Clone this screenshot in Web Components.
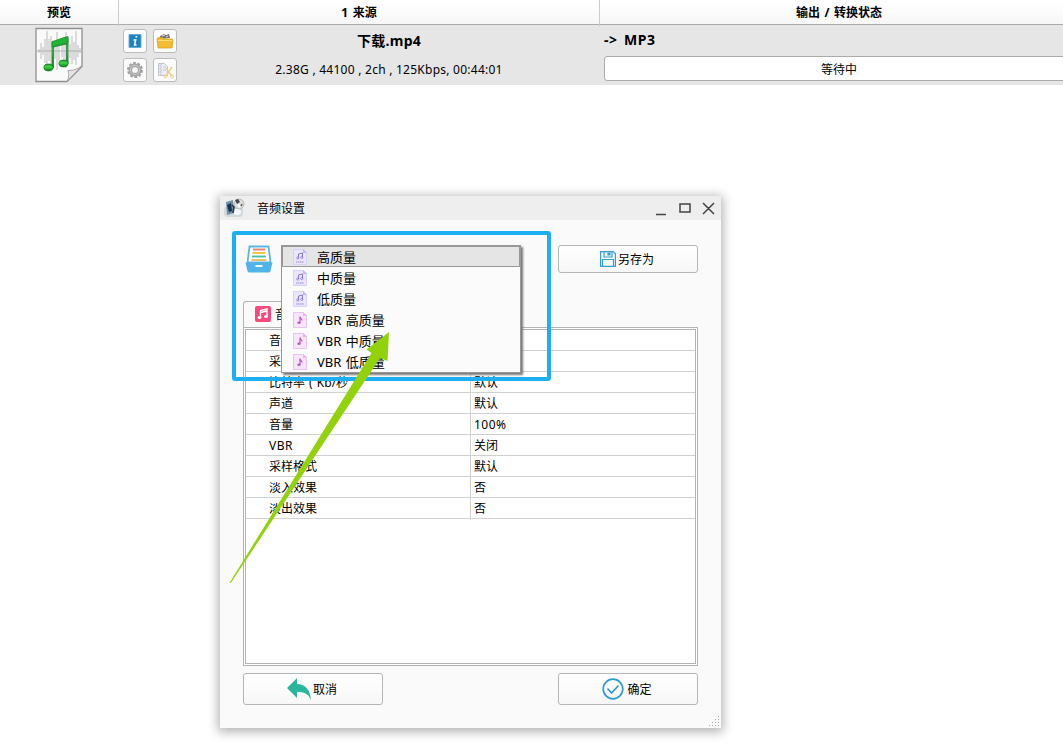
<!DOCTYPE html>
<html lang="zh-CN">
<head>
<meta charset="utf-8">
<title>音频设置</title>
<style>
html, body {
    margin: 0;
    height: 100%;
    overflow: hidden;
    background: #fff;
}
body {
    font-family: "Noto Sans", "Noto Sans CJK SC", sans-serif;
    font-size: 12px;
    line-height: 16px;
    color: #000;
}
</style>
</head>
<body>
<file-table>
    <media-row slot="rows"></media-row>
</file-table>
<settings-dialog heading="音频设置"></settings-dialog>
<callout-marks></callout-marks>

<script>
const icons = {
  preview: `<svg width="48" height="56" viewBox="0 0 48 56"><defs><linearGradient id="g" x2="0" y2="1"><stop stop-color="#159a2c"/><stop offset=".4" stop-color="#43d546"/><stop offset="1" stop-color="#0b7c13"/></linearGradient></defs>
    <path d="M1 1.500h46v38L32 54.500H1z" fill="#fafafa" stroke="#909090" stroke-width="1.300"/>
    <path d="M4 22v4M6 16v16M8 20v8M10 12v24M12 4v38M14 12v22M16 9v32M18 15v18M20 18v14M22 5v38M24 14v20M27 18v12M29 14v20M31 5v36M33 12v24M35 17v14M37 9v28M39 15v18M41 4v34M43 18v12M45 21v5" stroke="#c6c6c6" stroke-width="1.200"/>
    <path d="M2 24h44" stroke="#b0b0b0"/>
    <path d="M32 54.500c2-4 2-7 1-11 5 0 9-1 14-5z" fill="#e4e4e4" stroke="#999" stroke-width=".8"/>
    <path d="M17 15c5-1 10-4 16-5v27h-1.500V17L18.500 20v21H17z" fill="url(#g)" stroke="#0a6b16" stroke-width=".6"/>
    <path d="M17 14.500c5-1 10-4 16-5v6.500c-6 1-11 3-16 4z" fill="#22b336" stroke="#0f8724" stroke-width=".6"/>
    <ellipse cx="13.500" cy="40.500" rx="4.600" ry="3.400" fill="url(#g)" stroke="#087414" stroke-width=".7"/><ellipse cx="28.500" cy="36.500" rx="4.600" ry="3.400" fill="url(#g)" stroke="#087414" stroke-width=".7"/></svg>`,
  info: `<svg width="16" height="16" viewBox="0 0 16 16"><path d="M2 1.500h12v13H2z" fill="#1c82bd" stroke="#62aed8"/><path d="M8.500 3.700h1.800M6.500 7h2.200l-1.200 5h2" fill="none" stroke="#fff" stroke-width="1.500"/></svg>`,
  folder: `<svg width="18" height="18" viewBox="0 0 18 18"><path d="M4 7V4l4-2 2 1 3-1 1 4z" fill="#777"/><path d="M6 4l3-1M10 5l2-1" stroke="#ddd"/><path d="M1 7l1-1.500h4l2 1.500h8l1 1-1 8H2z" fill="#f2bd35" stroke="#d79b15" stroke-width=".7"/><path d="M2 8.500h14" stroke="#ffe17b"/></svg>`,
  gear: `<svg width="18" height="18" viewBox="0 0 18 18"><circle cx="9" cy="9" r="7" fill="none" stroke="#a2a2a2" stroke-width="2" stroke-dasharray="2.8 1.6"/><circle cx="9" cy="9" r="4.700" fill="none" stroke="#a5a5a5" stroke-width="3.700"/><circle cx="9" cy="9" r="4.500" fill="none" stroke="#c9c9c9" stroke-width="1.200"/></svg>`,
  cut: `<svg width="18" height="18" viewBox="0 0 18 18"><path d="M2.500 2.500h6l3 3v9h-9z" fill="#eceef5" stroke="#bfc4d2"/><path d="M5 3v11M3 5h2M3 8h2M3 11h2M7 6h3M7 9h3" stroke="#c4cad9"/><path d="M10 7l6 8M16 6l-6 9" stroke="#f0cf85" stroke-width="1.400"/><circle cx="9.500" cy="15.500" r="1.400" fill="none" stroke="#efca80"/><circle cx="16" cy="15.500" r="1.400" fill="none" stroke="#efca80"/></svg>`,
  app: `<svg width="22" height="20" viewBox="0 0 22 20"><rect x="1" y="8" width="19" height="11" rx="4" fill="#d3dade"/><path d="M3 4l7-2 1 13-7 2z" fill="#7390a8"/><path d="M4 7l4-2 1 8-3 1z" fill="#19314e"/><circle cx="16" cy="6" r="5" fill="#dededb" stroke="#999" stroke-width=".6"/><path d="M12 2l3-1 2 3-3 2z" fill="#444"/><path d="M14 6l4 1-2 3z" fill="#fff"/><path d="M18 8l1-2" stroke="#555" stroke-width="1.500"/><ellipse cx="14" cy="14" rx="4" ry="3" fill="#f7f9fa"/><path d="M9 7l2 2-1 6" fill="none" stroke="#263a50" stroke-width="1.600"/></svg>`,
  drawer: `<svg width="28" height="30" viewBox="0 0 28 30"><path d="M4.500 1.500h19l2 16h-23z" fill="#fff" stroke="#5bb6e7" stroke-width="1.800"/><path d="M8 4.500h12" stroke="#ec7d69" stroke-width="1.900"/><path d="M7.500 8h13" stroke="#f3c43d" stroke-width="1.900"/><path d="M7 11.500h14" stroke="#49bea9" stroke-width="1.900"/><path d="M6.500 15h15" stroke="#f3b85b" stroke-width="1.900"/><path d="M.5 17.500h27L25.500 26q-.3 1.500-2 1.500h-19q-1.700 0-2-1.500z" fill="#50b4e8"/><path d="M10.500 21h7" stroke="#fff" stroke-width="1.800"/></svg>`,
  music: `<svg width="16" height="16" viewBox="0 0 16 16"><rect width="16" height="16" rx="2" fill="#f9487b"/><path d="M5.500 11V4.500L12 3v7M5.500 6.500L12 5" fill="none" stroke="#fff" stroke-width="1.400"/><ellipse cx="4.500" cy="11.500" rx="1.900" ry="1.500" fill="#fff"/><ellipse cx="11" cy="10.500" rx="1.900" ry="1.500" fill="#fff"/></svg>`,
  save: `<svg width="16" height="16" viewBox="0 0 16 16" fill="none" stroke="#329fd0" stroke-width="1.200"><path d="M.6.6h12.600l2.200 2.200v12.600H.6z"/><path d="M4 1v5h8V1M2.500 15V8.500h11V15"/><path d="M8 2h2v2H8z" fill="#329fd0"/></svg>`,
  back: `<svg width="24" height="22" viewBox="0 0 24 22"><path d="M0 10L10 0v6c8 0 13 5 14 16-3-7-7-8-14-8v6z" fill="#2ab69d"/></svg>`,
  check: `<svg width="22" height="22" viewBox="0 0 22 22" fill="none" stroke="#2e9ad2" stroke-width="1.700"><circle cx="11" cy="11" r="9.800"/><path d="M5.500 10.500l4 4.500L16.500 7.500"/></svg>`,
  quality: `<svg width="14" height="16" viewBox="0 0 14 16"><path d="M.5.5h10l3 3v12H.5z" fill="#eae6ff" stroke="#d8d1f7"/><path d="M10 0v4h4z" fill="#c3b8f3"/><path d="M5.500 9V5l4-1v4.500" fill="none" stroke="#8b78d5"/><circle cx="4.800" cy="9" r="1.100" fill="none" stroke="#8b78d5" stroke-width=".8"/><circle cx="8.800" cy="8.500" r="1.100" fill="none" stroke="#8b78d5" stroke-width=".8"/><path d="M3 13h8" stroke="#b5ace6" stroke-width="1.300" stroke-dasharray="1.500 .4"/></svg>`,
  vbr: `<svg width="14" height="16" viewBox="0 0 14 16"><path d="M.5.5h10l3 3v12H.5z" fill="#f7e5fb" stroke="#e7c3ee"/><path d="M10 0v4h4z" fill="#e4b5eb"/><path d="M7 10.500V4.500c0 2 2 2 2 4" fill="none" stroke="#b45bc5" stroke-width="1.200"/><ellipse cx="6" cy="10.700" rx="1.700" ry="1.300" fill="#b45bc5"/></svg>`
};

class FileTable extends HTMLElement {
  constructor() {
    super();
    this.attachShadow({ mode: "open" }).innerHTML = `
<style>
:host {
    display: block;
    overflow: hidden;
}
header {
    display: grid;
    grid-template-columns: 118px 481px 479px;
    height: 24px;
    border-bottom: 1px solid #ababab;
    background: linear-gradient(#fff, #f7f7f7);
    font-weight: bold;
    line-height: 26px;
    text-align: center;
    word-spacing: 1.5px;
}
span + span {
    border-left: 1px solid #ccc;
}
</style>
<header><span>预览</span><span>1 来源</span><span>输出 / 转换状态</span></header>
<slot name="rows"></slot>`;
  }
}
customElements.define("file-table", FileTable);

class MediaRow extends HTMLElement {
  constructor() {
    super();
    this.attachShadow({ mode: "open" }).innerHTML = `
<style>
:host {
    display: grid;
    grid-template-columns: 119px 60px 420px 475px;
    height: 60px;
    background: #e6e6e6;
}
svg {
    display: block;
}
.preview {
    padding: 2px 0 0 35px;
}
.tools {
    display: grid;
    grid-template-columns: 24px 24px;
    grid-auto-rows: 24px;
    gap: 5px 6px;
    padding: 4px;
}
.tools div {
    display: flex;
    align-items: center;
    justify-content: center;
    box-sizing: border-box;
    border: 1px solid #bcbcbc;
    border-radius: 3px;
    background: #fcfcfc;
}
.source {
    text-align: center;
}
b {
    display: block;
    font-size: 14px;
    line-height: 20px;
    padding-top: 6px;
    letter-spacing: .3px;
}
.info {
    padding-top: 11px;
    letter-spacing: .25px;
}
.output b {
    padding: 5px 0 0 5px;
    letter-spacing: .6px;
    word-spacing: 2px;
}
.progress {
    box-sizing: border-box;
    height: 25px;
    margin: 6px 0 0 5px;
    border: 1px solid #ababab;
    border-radius: 3px;
    background: #fff;
    line-height: 25px;
    text-align: center;
}
</style>
<div class="preview">${icons.preview}</div>
<div class="tools"><div>${icons.info}</div><div>${icons.folder}</div><div>${icons.gear}</div><div>${icons.cut}</div></div>
<div class="source"><b>下载.mp4</b><div class="info">2.38G , 44100 , 2ch , 125Kbps, 00:44:01</div></div>
<div class="output"><b>-&gt; MP3</b><div class="progress">等待中</div></div>`;
  }
}
customElements.define("media-row", MediaRow);

class IconButton extends HTMLElement {
  connectedCallback() {
    this.attachShadow({ mode: "open" }).innerHTML = `
<style>
:host {
    display: flex;
    align-items: center;
    justify-content: center;
    gap: 2px;
    box-sizing: border-box;
    width: 140px;
    height: 32px;
    padding-right: 2px;
    border: 1px solid #b5b5b5;
    border-radius: 3px;
    background: linear-gradient(#fff, #f7f7f7);
}
svg {
    display: block;
}
span {
    padding-top: 1px;
}
</style>
${icons[this.getAttribute("icon")]}<span><slot></slot></span>`;
  }
}
customElements.define("icon-button", IconButton);

class PropertyTable extends HTMLElement {
  connectedCallback() {
    // the first two rows are mostly below the open menu
    const rows = [
      ["音", ""],
      ["采", ""],
      ["比特率 ( Kb/秒 )", "默认"],
      ["声道", "默认"],
      ["音量", "100%"],
      ["VBR", "关闭"],
      ["采样格式", "默认"],
      ["淡入效果", "否"],
      ["淡出效果", "否"]
    ];
    this.attachShadow({ mode: "open" }).innerHTML = `
<style>
:host {
    display: block;
    box-sizing: border-box;
    height: 339px;
    border: 3px double #b3b3b3;
    background: #fff;
}
.row {
    display: grid;
    grid-template-columns: 224px 1fr;
    height: 20px;
    border-bottom: 1px solid #d0d0d0;
    line-height: 22px;
    white-space: nowrap;
}
.name {
    padding-left: 23px;
    word-spacing: 1px;
}
.value {
    padding-left: 3px;
    border-left: 1px solid #d0d0d0;
}
.latin {
    letter-spacing: .5px;
}
</style>
${rows.map(([name, value]) => `<div class="row"><div class="name${name === "VBR" ? " latin" : ""}">${name}</div><div class="value${value === "100%" ? " latin" : ""}">${value}</div></div>`).join("")}`;
  }
}
customElements.define("property-table", PropertyTable);

class QualityMenu extends HTMLElement {
  connectedCallback() {
    const items = ["高质量", "中质量", "低质量", "VBR 高质量", "VBR 中质量", "VBR 低质量"];
    this.attachShadow({ mode: "open" }).innerHTML = `
<style>
:host {
    display: block;
    box-sizing: border-box;
    border: 1px solid #989898;
    background: #fbfbfb;
    box-shadow: 2px 2px 2px #777;
}
.item {
    display: flex;
    align-items: center;
    gap: 10px;
    box-sizing: border-box;
    height: 21px;
    padding-left: 11px;
    font-size: 13px;
}
.item span {
    word-spacing: 1px;
}
.item.selected {
    padding-left: 10px;
    border: 1px solid #989898;
    background: #e5e5e5;
}
svg {
    display: block;
}
</style>
${items.map((item, i) => `<div class="item${i === 0 ? " selected" : ""}">${i < 3 ? icons.quality : icons.vbr}<span>${item}</span></div>`).join("")}`;
  }
}
customElements.define("quality-menu", QualityMenu);

class SettingsDialog extends HTMLElement {
  connectedCallback() {
    this.attachShadow({ mode: "open" }).innerHTML = `
<style>
:host {
    position: absolute;
    left: 220px;
    top: 196px;
    width: 501px;
    height: 532px;
    background: #fafafa;
    box-shadow: 0 2px 10px 2px rgba(0, 0, 0, .3);
}
svg {
    display: block;
}
header {
    display: flex;
    align-items: center;
    height: 24px;
    padding: 0 4px 0 3px;
    background: #eee;
}
h1 {
    flex: 1;
    margin: 0 0 0 12px;
    padding-top: 1px;
    font-size: 12px;
    font-weight: normal;
}
main {
    padding: 25px 23px 0;
}
.top {
    display: flex;
    justify-content: space-between;
    height: 56px;
    padding-left: 2px;
}
.top icon-button {
    height: 28px;
}
.tab {
    display: flex;
    align-items: center;
    gap: 4px;
    box-sizing: border-box;
    width: 90px;
    height: 26px;
    padding-left: 11px;
    border: 1px solid #b3b3b3;
    border-bottom: 0;
    border-radius: 3px 3px 0 0;
}
.tab svg {
    margin-bottom: 1px;
}
.tab span {
    padding-top: 1px;
}
footer {
    display: flex;
    justify-content: space-between;
    padding-top: 7px;
}
quality-menu {
    position: absolute;
    left: 61px;
    top: 49px;
    width: 240px;
    height: 128px;
}
.grip {
    position: absolute;
    right: 1px;
    bottom: 1px;
}
</style>
<header>${icons.app}<h1>${this.getAttribute("heading")}</h1>
<svg width="62" height="16" viewBox="0 0 62 16" fill="none" stroke="#444" stroke-width="1.500"><path d="M1 14.500h10M25 4h10v8H25zM48 3l11 11M59 3L48 14"/></svg></header>
<main>
<div class="top">${icons.drawer}<icon-button icon="save">另存为</icon-button></div>
<div class="tab">${icons.music}<span>音</span></div>
<property-table></property-table>
<footer><icon-button icon="back">取消</icon-button><icon-button icon="check">&#8202;确定</icon-button></footer>
</main>
<quality-menu></quality-menu>
<svg class="grip" width="11" height="11" viewBox="0 0 11 11"><path d="M9 .5h1M6 3.500h1m2 0h1M3 6.500h1m2 0h1m2 0h1M0 9.500h1m2 0h1m2 0h1m2 0h1" stroke="#aaa"/></svg>`;
  }
}
customElements.define("settings-dialog", SettingsDialog);

class CalloutMarks extends HTMLElement {
  constructor() {
    super();
    this.attachShadow({ mode: "open" }).innerHTML = `
<style>
:host {
    position: absolute;
    left: 220px;
    top: 220px;
    pointer-events: none;
}
svg {
    display: block;
}
</style>
<svg width="340" height="370" viewBox="220 220 340 370">
<rect x="234" y="233" width="315" height="146" rx="1" fill="none" stroke="#1eaef4" stroke-width="4"/>
<path d="M229.500 583L371.500 353 366.500 349.500 389 332 387.500 361 380 358 230.800 583z" fill="#92d20b"/>
</svg>`;
  }
}
customElements.define("callout-marks", CalloutMarks);
</script>
</body>
</html>
